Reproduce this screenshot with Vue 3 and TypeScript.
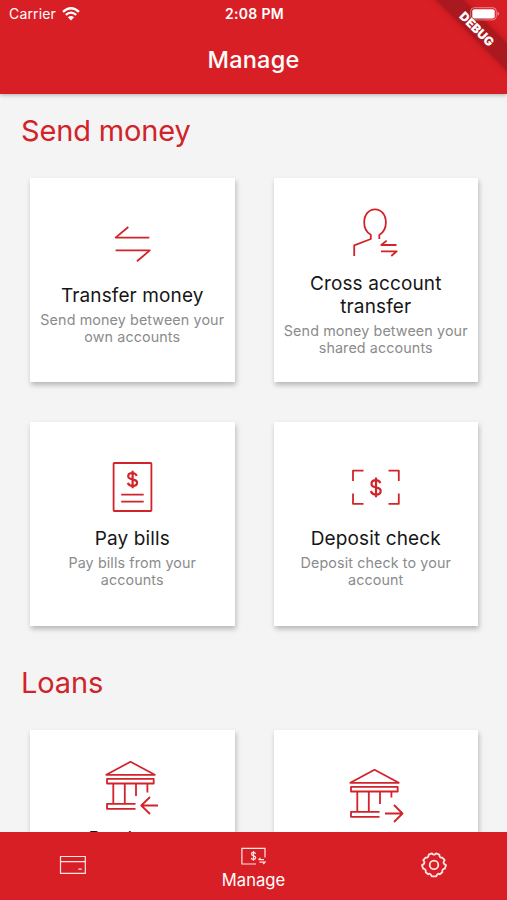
<script setup lang="ts">
interface Action {
  icon: string
  title: string
  text: string
}
interface Section {
  heading: string
  actions: Action[]
}

const sections: Section[] = [
  {
    heading: 'Send money',
    actions: [
      { icon: 'transfer', title: 'Transfer money', text: 'Send money between your own accounts' },
      { icon: 'person', title: 'Cross account transfer', text: 'Send money between your shared accounts' },
      { icon: 'bill', title: 'Pay bills', text: 'Pay bills from your accounts' },
      { icon: 'check', title: 'Deposit check', text: 'Deposit check to your account' },
    ],
  },
  {
    heading: 'Loans',
    actions: [
      { icon: 'bank-in', title: 'Pay loans', text: 'Make a payment on one of your loans from any of your accounts' },
      { icon: 'bank-out', title: 'Loan payout', text: 'Receive money from one of your loans' },
    ],
  },
]
</script>

<template>
  <div class="screen">
    <header class="top">
      <div class="status">
        <div class="carrier">
          <span>Carrier</span>
          <svg class="wifi" viewBox="0 0 18 14" width="18" height="14">
            <path d="M1 4.8Q9-2.2 17 4.8M3.8 7.8Q9 3.4 14.2 7.8" fill="none" stroke="#fff" stroke-width="2.3" />
            <path d="M5.9 10.2Q9 7.6 12.1 10.2L9 13.6Z" fill="#fff" />
          </svg>
        </div>
        <span class="time">2:08 PM</span>
        <svg class="battery" viewBox="0 0 30 14" width="30" height="14">
          <rect x=".7" y=".7" width="25.6" height="12.2" rx="3.5" fill="none" stroke="#fff" stroke-opacity=".45" />
          <rect x="2.3" y="2.2" width="22.4" height="9.2" rx="2" fill="#fff" />
          <path d="M27.5 4.8v4q1.6-.7 1.6-2t-1.6-2" fill="#fff" fill-opacity=".5" />
        </svg>
      </div>
      <h1>Manage</h1>
      <div class="debug">DEBUG</div>
    </header>

    <main>
      <section v-for="section in sections" :key="section.heading">
        <h2>{{ section.heading }}</h2>
        <div class="grid">
          <article v-for="action in section.actions" :key="action.title" class="card">
            <svg v-if="action.icon === 'transfer'" class="icon" viewBox="0 0 54 54">
              <path d="M44.3 20.6H10.6L23.3 10M10.6 33.4H44.8L32 44.3" />
            </svg>
            <svg v-else-if="action.icon === 'person'" class="icon" viewBox="0 0 54 54">
              <path d="M5.2 51V40.4L21.8 34V29.8C17.4 27.3 15.2 22 15.2 17.5C15.2 9.5 20 4.3 26 4.3S36.9 9.5 36.9 17.5C36.9 22.7 34.3 27.6 30.3 30V34" />
              <path d="M47.5 40H32.3L37.7 35.6M32 46.3H47.7L42.3 51" />
            </svg>
            <svg v-else-if="action.icon === 'bill'" class="icon" viewBox="0 0 54 54">
              <rect x="8.6" y="3" width="37.8" height="48" rx=".8" />
              <path d="M16.2 34.6H38.7M16.2 41.6H38.7" />
              <path class="dollar" d="M31.8 15.9C30.8 13.8 29.2 13 27.4 13C24.8 13 23.2 14.4 23.2 16.3C23.2 20.8 32.1 18 32.1 22.6C32.1 24.8 30.3 26 27.6 26C25.2 26 23.6 25 22.8 22.9M27.6 10.8V28.2" />
            </svg>
            <svg v-else-if="action.icon === 'check'" class="icon" viewBox="0 0 54 54">
              <path d="M4 21V10.6H14.5M39.5 10.6H49.8V21M49.8 33.6V43.8H39.5M14.5 43.8H4V33.6" />
              <path class="dollar" d="M31.3 23.2C30.5 21 28.9 20.2 27 20.2C24.2 20.2 22.5 21.7 22.5 23.9C22.5 29.1 31.7 25.6 31.7 31C31.7 33.4 29.7 34.6 27 34.6C24.2 34.6 22.7 33.2 21.9 31M27 17.6V37.2" />
            </svg>
            <svg v-else class="icon bank" viewBox="0 0 54 54">
              <path d="M2.3 14.8L26.5 1.8L50.8 14.8Z M3 18.9H49.7V23.5H3Z" />
              <path d="M9.3 23.5V43.8M20.8 23.5V43.8M32 23.5V36M31.5 43.8H3V48.8H31.5" />
              <path v-if="action.icon === 'bank-in'" d="M43.4 23.5V32.5M54 45.5H37.3M46 37L37.3 45.5L46 54" />
              <path v-else d="M43.4 23.5V29.5M37 45.5H54M46 37L54.5 45.5L46 54" />
            </svg>
            <h3>{{ action.title }}</h3>
            <p>{{ action.text }}</p>
          </article>
        </div>
      </section>
    </main>

    <nav>
      <div class="tab">
        <svg viewBox="0 0 28 20" width="28" height="20">
          <path d="M1.5 1.5H26.3V18.3H1.5ZM1.5 6.6H26.3M19.3 14.2H22.7" />
        </svg>
      </div>
      <div class="tab active">
        <svg viewBox="0 0 28 20" width="28" height="20">
          <path d="M16 18H1.9V2.3H25V11.5M18.5 13.7H24M18.5 13.7L20.5 12M19.5 16.2H25L23.2 18" />
          <path d="M15.5 7.8Q15.1 6.4 13.5 6.4Q11.5 6.4 11.5 8.1C11.5 10.6 15.7 9 15.7 11.7Q15.7 13.4 13.5 13.4Q11.7 13.4 11.3 12M13.5 5V14.8" />
        </svg>
        <span>Manage</span>
      </div>
      <div class="tab">
        <svg class="gear" viewBox="0 0 28 28" width="28" height="28">
          <path d="M11.9 2.4Q14 4.8 16.1 2.4L19.3 3.6Q19.3 6.9 22.4 6.7L24.7 9.1Q23.2 11 23.7 12.2Q24.3 13.3 26 14.1L24.8 17.7Q21.7 18 22.3 21.2L19.8 23.3Q17.6 21.6 16.3 25.3H11.7Q10.4 21.6 8.2 23.3L5.7 21.2Q6.3 18 3.2 17.7L2 14.1Q3.7 13.3 4.3 12.2Q4.8 11 3.3 9.1L5.6 6.7Q8.7 6.9 8.7 3.6Z" />
          <circle cx="14" cy="13.9" r="4.3" />
        </svg>
      </div>
    </nav>
  </div>
</template>

<style>
body {
  margin: 0;
  overflow: hidden;
}
</style>

<style scoped>
.screen {
  width: 507px;
  height: 900px;
  display: flex;
  flex-direction: column;
  overflow: hidden;
  background: #f4f4f4;
  font-family: Inter, 'Liberation Sans', sans-serif;
}
.top {
  position: relative;
  z-index: 1;
  flex: none;
  height: 94px;
  background: #d91f26;
  color: #fff;
  box-shadow: 0 1px 4px rgba(0, 0, 0, 0.3);
  clip-path: inset(0 0 -8px 0);
}
.status {
  display: grid;
  grid-template-columns: 1fr auto 1fr;
  align-items: center;
  height: 27px;
  padding: 0 7px 0 9px;
}
.carrier {
  display: flex;
  align-items: center;
  gap: 6px;
  font-size: 14px;
  letter-spacing: 0.15px;
}
.time {
  font-size: 14px;
  font-weight: 600;
  letter-spacing: 0.3px;
}
.battery {
  position: relative;
  z-index: 2;
  justify-self: end;
}
h1,
h2,
h3,
p {
  margin: 0;
}
h1 {
  font-size: 23.5px;
  line-height: 28px;
  padding-top: 19px;
  font-weight: 500;
  letter-spacing: 0.2px;
  text-align: center;
}
.debug {
  position: absolute;
  top: 19px;
  right: -41px;
  width: 140px;
  height: 18px;
  transform: rotate(45deg);
  background: #a9191f;
  box-shadow: 0 0 6px rgba(100, 0, 0, 0.5);
  font-size: 12.3px;
  line-height: 22px;
  font-weight: 900;
  text-align: center;
}
main {
  flex: 1;
  min-height: 0;
  overflow: hidden;
}
h2 {
  padding: 19px 21px 0;
  font-size: 29px;
  line-height: 36px;
  font-weight: 400;
  letter-spacing: -0.15px;
  color: #d0232a;
}
.grid {
  display: grid;
  grid-template-columns: 204.5px 204.5px;
  grid-auto-rows: 204px;
  gap: 39.5px 39px;
  padding: 29px 30px 20px;
}
.card {
  box-sizing: border-box;
  display: flex;
  flex-direction: column;
  align-items: center;
  justify-content: center;
  padding: 1px 6px 0;
  background: #fff;
  box-shadow: 1px 3px 5px rgba(0, 0, 0, 0.25);
  text-align: center;
}
.icon {
  flex: none;
  width: 54px;
  height: 54px;
  margin-bottom: 13px;
  overflow: visible;
  fill: none;
  stroke: #d3232a;
  stroke-width: 1.8;
  stroke-linejoin: round;
}
.icon .dollar {
  stroke-width: 2.2;
}
.bank {
  position: relative;
  left: -1px;
}
h3 {
  font-size: 19px;
  line-height: 23px;
  font-weight: 400;
  letter-spacing: 0.12px;
  color: #161616;
}
p {
  margin-top: 4px;
  font-size: 14.3px;
  line-height: 17px;
  letter-spacing: 0.12px;
  color: #8b8b8b;
}
nav {
  position: relative;
  z-index: 1;
  flex: none;
  box-sizing: border-box;
  height: 68px;
  display: grid;
  grid-template-columns: 146px 1fr 146px;
  padding-bottom: 2px;
  background: #d91f26;
  color: #fff;
}
.tab {
  display: flex;
  flex-direction: column;
  align-items: center;
  justify-content: center;
}
.tab svg {
  fill: none;
  stroke: #ffe5e5;
  stroke-width: 1.2;
}
.tab.active {
  padding-top: 6px;
}
.tab .gear {
  stroke-width: 1.8;
  stroke-linejoin: round;
}
.tab span {
  margin-top: 3px;
  font-size: 16.6px;
  line-height: 22px;
}
</style>
